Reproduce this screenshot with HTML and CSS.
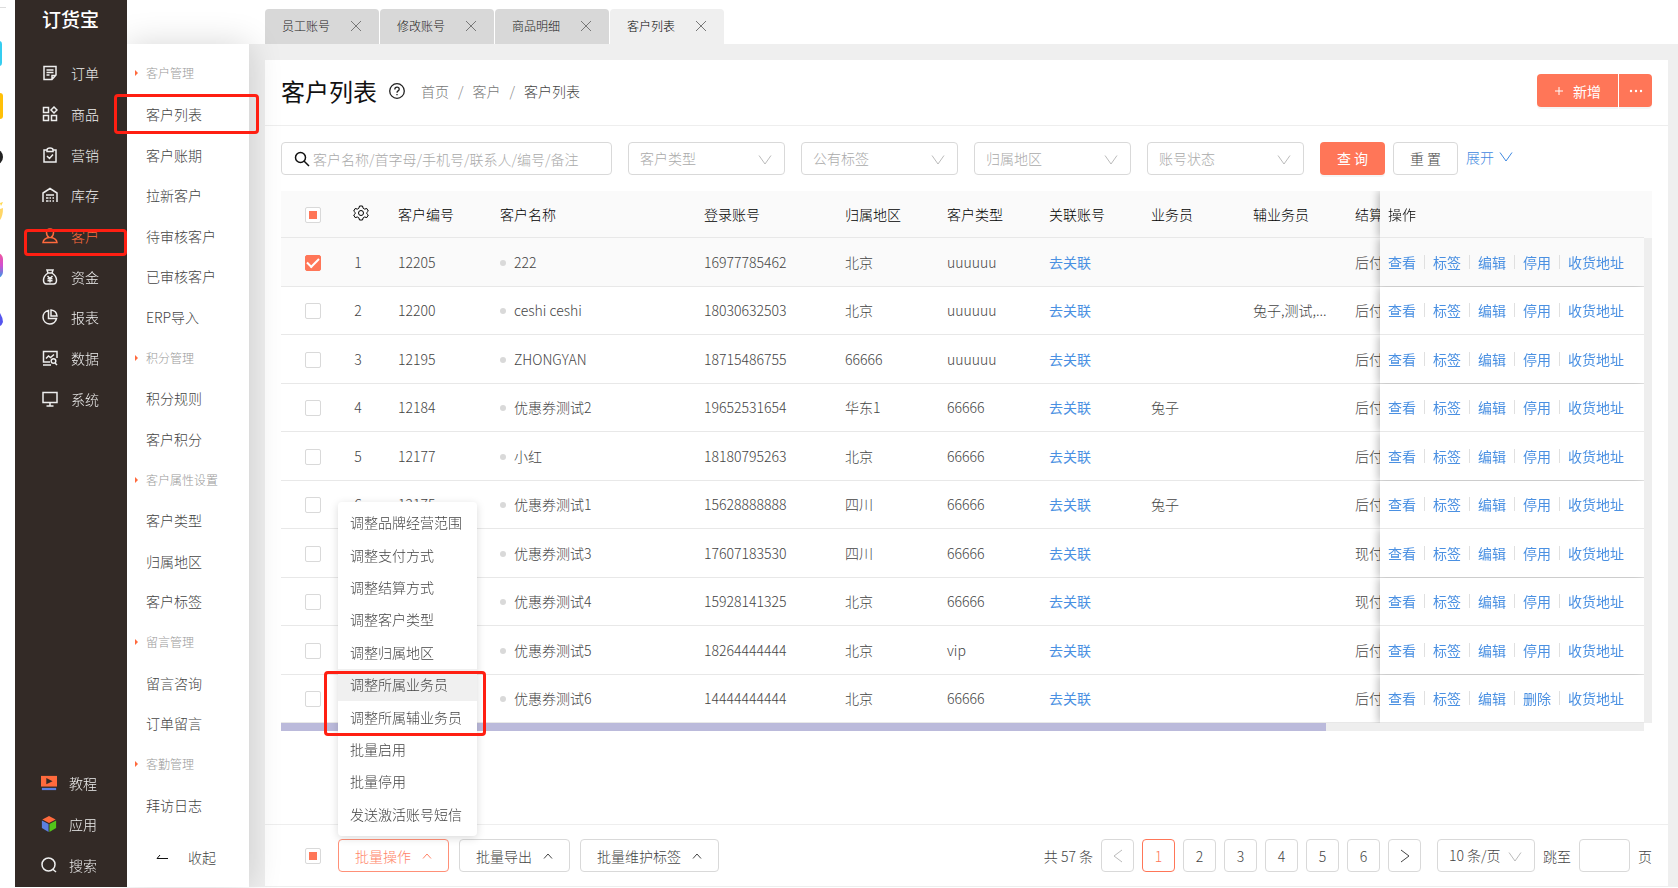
FILE: index.html
```html
<!DOCTYPE html>
<html lang="zh-CN">
<head>
  <meta charset="UTF-8" />
  <meta name="viewport" content="width=device-width, initial-scale=1.0" />
  <title>客户列表</title>
  <link rel="stylesheet" href="styles.css">
</head>
<body>
  <div class="app">
    <div class="dock">
      <svg width="15" height="340" viewBox="0 0 15 340">
        <defs>
          <linearGradient id="dockPink" x1="0" y1="0" x2="0" y2="1">
            <stop offset="0" stop-color="#f0559a" /><stop offset=".5" stop-color="#d24fd0" /><stop offset="1" stop-color="#2f9be8" />
          </linearGradient>
        </defs>
        <rect x="0" y="7" width="6" height="1" fill="#ddd" />
        <rect x="-10" y="41" width="12" height="25" rx="3" fill="#35cdf0" />
        <rect x="-10" y="93" width="13" height="26" rx="3" fill="#ffc008" />
        <circle cx="-5" cy="157" r="8" fill="#222" />
        <path d="M0 203 L3 202 L1 206 Z" fill="#ffd84a" />
        <path d="M0 209 L3 208 Q3 216 0 220 Z" fill="#ffd667" />
        <rect x="-10" y="253" width="13" height="25" rx="6" fill="url(#dockPink)" />
        <path d="M0 313 Q3 318 3 322 Q2 325 0 326 Z" fill="#5555ee" />
      </svg>
    </div>

    <aside class="sidebar">
      <div class="logo">订货宝</div>
      <ul class="nav">
        <li><a href="#"><svg class="nav-icon" viewBox="0 0 16 16"><path d="M14 10V1.5H2v13h8zM10 14.500V10.500h4M4.500 5h7M4.500 7.500h7M4.500 10h3" /></svg>订单</a></li>
        <li><a href="#"><svg class="nav-icon" viewBox="0 0 16 16"><path d="M1.500 1.500h5v5h-5zM1.500 9.500h5v5h-5zM9.500 9.500h5v5h-5zM12 1l3 3-3 3-3-3z" /></svg>商品</a></li>
        <li><a href="#"><svg class="nav-icon" viewBox="0 0 16 16"><path d="M5 3H2v12h12V3h-3M5 4.500V3q0-2 3-2t3 2v1.500zM5 9l2.500 2.500L11 7.500" /></svg>营销</a></li>
        <li><a href="#"><svg class="nav-icon" viewBox="0 0 16 16"><path d="M1 15V6l7-4.500L15 6v9M4 8h8M4 11h2.500M7.500 11H9M10.500 11H12M4 14h2.500M7.500 14H9M10.500 14H12" /></svg>库存</a></li>
        <li class="active"><a href="#"><svg class="nav-icon" viewBox="0 0 16 16"><path d="M8 1q-3.500 0-3.500 3.500T7 9.500Q1.500 10.500 1 14.500h14q-.5-4-6-5 2.500-1.500 2.500-5T8 1z" /></svg>客户</a></li>
        <li><a href="#"><svg class="nav-icon" viewBox="0 0 16 16"><path d="M5 1h6L10 4q4.500 3 4.500 7 0 4-3 4h-7q-3 0-3-4 0-4 4.500-7zM6 4h4M5.500 7L8 9.500 10.500 7M8 9.500V13.500M5.500 9.700h5M5.500 11.700h5" /></svg>资金</a></li>
        <li><a href="#"><svg class="nav-icon" viewBox="0 0 16 16"><path d="M6.500 1.500A6.800 6.800 0 1 0 14.500 9.500H6.500zM9 1v6h6Q14.500 1.500 9 1z" /></svg>报表</a></li>
        <li><a href="#"><svg class="nav-icon" viewBox="0 0 16 16"><path d="M15 8V1.500H1.500V12H8M1 15h8M4 8.500L6.500 6l2 1.500L12 4.500M15 15l-2-2" /><circle cx="11.500" cy="11" r="2.300" /></svg>数据</a></li>
        <li><a href="#"><svg class="nav-icon" viewBox="0 0 16 16"><path d="M1 1.500h14v10H1zM8 11.500v3M4.500 15h7" /></svg>系统</a></li>
      </ul>
      <ul class="nav nav-bottom">
        <li><a href="#"><svg class="nav-icon color" viewBox="0 0 18 16"><rect x="0" y="0" width="18" height="12" fill="#ff6a3d" /><path d="M6 2.500v7l7-3.500z" fill="#332a26" /><rect x="1" y="13.500" width="16" height="2.500" fill="#5b7fe0" /></svg>教程</a></li>
        <li><a href="#"><svg class="nav-icon color" viewBox="0 0 16 18"><path d="M8 0l7.500 4L8 8 .5 4z" fill="#ff6a3d" /><path d="M0 5l7.500 4v9L0 13.500z" fill="#5b7fe0" /><path d="M16 5L8.500 9v9l7.500-4.500z" fill="#52c41a" /></svg>应用</a></li>
        <li><a href="#"><svg class="nav-icon" viewBox="0 0 16 16"><circle cx="7.500" cy="7.500" r="6.500" /><path d="M11.500 12l3.500 3" /></svg>搜索</a></li>
      </ul>
      <div class="mark mark-nav"></div>
    </aside>

    <nav class="submenu">
      <ul>
        <li class="group">客户管理</li>
        <li><a href="#">客户列表</a><div class="mark mark-sub"></div></li>
        <li><a href="#">客户账期</a></li>
        <li><a href="#">拉新客户</a></li>
        <li><a href="#">待审核客户</a></li>
        <li><a href="#">已审核客户</a></li>
        <li><a href="#">ERP导入</a></li>
        <li class="group">积分管理</li>
        <li><a href="#">积分规则</a></li>
        <li><a href="#">客户积分</a></li>
        <li class="group">客户属性设置</li>
        <li><a href="#">客户类型</a></li>
        <li><a href="#">归属地区</a></li>
        <li><a href="#">客户标签</a></li>
        <li class="group">留言管理</li>
        <li><a href="#">留言咨询</a></li>
        <li><a href="#">订单留言</a></li>
        <li class="group">客勤管理</li>
        <li><a href="#">拜访日志</a></li>
      </ul>
      <button class="collapse" type="button">
        <svg width="12" height="6" viewBox="0 0 12 6"><path d="M12 4.500H1L4 1" /></svg>收起
      </button>
    </nav>

    <main class="main">
      <div class="tabs">
        <div class="tab">员工账号<button type="button" aria-label="关闭"><svg viewBox="0 0 12 12"><path d="M1 1l10 10M11 1L1 11" /></svg></button></div>
        <div class="tab">修改账号<button type="button" aria-label="关闭"><svg viewBox="0 0 12 12"><path d="M1 1l10 10M11 1L1 11" /></svg></button></div>
        <div class="tab">商品明细<button type="button" aria-label="关闭"><svg viewBox="0 0 12 12"><path d="M1 1l10 10M11 1L1 11" /></svg></button></div>
        <div class="tab current">客户列表<button type="button" aria-label="关闭"><svg viewBox="0 0 12 12"><path d="M1 1l10 10M11 1L1 11" /></svg></button></div>
      </div>

      <div class="content">
        <div class="card">
          <header class="page-head">
            <h1>客户列表</h1>
            <svg class="help" viewBox="0 0 16 16"><circle cx="8" cy="8" r="7.300" /><path d="M5.800 6.500q0-2.300 2.200-2.300t2.200 2q0 1-1.100 1.700T8 9.800M8 11v1.300" /></svg>
            <div class="crumbs"><a href="#">首页</a><span>/</span><a href="#">客户</a><span>/</span><b>客户列表</b></div>
            <div class="split">
              <button class="btn primary" type="button"><svg width="10" height="10" viewBox="0 0 10 10"><path d="M1 5h8M5 1v8" /></svg>新增</button>
              <button class="btn primary more" type="button" aria-label="更多"><svg width="14" height="4" viewBox="0 0 14 4"><circle cx="2" cy="2" r="1.200" /><circle cx="7" cy="2" r="1.200" /><circle cx="12" cy="2" r="1.200" /></svg></button>
            </div>
          </header>

          <form class="filters">
            <label class="search">
              <svg width="16" height="16" viewBox="0 0 16 16"><circle cx="6.500" cy="6.500" r="5" /><path d="M10 10l5 5" /></svg>
              <input type="text" placeholder="客户名称/首字母/手机号/联系人/编号/备注">
            </label>
            <label class="pick"><select aria-label="客户类型"><option>客户类型</option></select><svg viewBox="0 0 14 10"><path d="M1 .5l6 8.500 6-8.500" /></svg></label>
            <label class="pick"><select aria-label="公有标签"><option>公有标签</option></select><svg viewBox="0 0 14 10"><path d="M1 .5l6 8.500 6-8.500" /></svg></label>
            <label class="pick"><select aria-label="归属地区"><option>归属地区</option></select><svg viewBox="0 0 14 10"><path d="M1 .5l6 8.500 6-8.500" /></svg></label>
            <label class="pick"><select aria-label="账号状态"><option>账号状态</option></select><svg viewBox="0 0 14 10"><path d="M1 .5l6 8.500 6-8.500" /></svg></label>
            <div class="actions">
              <button class="btn primary" type="button">查 询</button>
              <button class="btn" type="button">重 置</button>
              <a class="expand" href="#">展开<svg width="14" height="10" viewBox="0 0 14 10"><path d="M1 .5l6 8.500 6-8.500" /></svg></a>
            </div>
          </form>

          <div class="table-area">
            <div class="table-view">
              <table>
                <colgroup>
                  <col class="c-check"><col class="c-index"><col class="c-unit"><col class="c-name"><col class="c-login">
                  <col class="c-unit"><col class="c-unit"><col class="c-unit"><col class="c-unit"><col class="c-unit"><col class="c-pay"><col class="c-ops">
                </colgroup>
                <thead>
                  <tr>
                    <th class="check"><input class="partial" type="checkbox" aria-label="全选"></th>
                    <th class="index"><svg class="gear" viewBox="0 0 16 16"><path d="M6.500 1h3l.6 2.200 1.500.9 2.200-.6 1.500 2.600L13.700 7.700v.8l1.600 1.500-1.500 2.600-2.200-.6-1.500.9L9.500 15h-3l-.6-2.100-1.500-.9-2.200.6L.7 10l1.600-1.500v-.8L.7 6.100l1.500-2.600 2.200.6 1.500-.9z" /><circle cx="8" cy="8" r="2.500" /></svg></th>
                    <th>客户编号</th><th>客户名称</th><th>登录账号</th><th>归属地区</th><th>客户类型</th>
                    <th>关联账号</th><th>业务员</th><th>辅业务员</th><th>结算方式</th><th class="ops">操作</th>
                  </tr>
                </thead>
                <tbody id="rows"></tbody>
              </table>
              <div class="hbar"><div class="thumb"></div></div>
            </div>
            <div class="vbar"></div>
          </div>

          <footer class="page-foot">
            <input class="partial" type="checkbox" aria-label="全选">
            <div class="drop">
              <button class="btn open" type="button">批量操作<svg width="10" height="6" viewBox="0 0 10 6"><path d="M1 5.500l4-4.500 4 4.500" /></svg></button>
              <ul class="menu">
                <li>调整品牌经营范围</li>
                <li>调整支付方式</li>
                <li>调整结算方式</li>
                <li>调整客户类型</li>
                <li>调整归属地区</li>
                <li class="hover">调整所属业务员</li>
                <li>调整所属辅业务员</li>
                <li>批量启用</li>
                <li>批量停用</li>
                <li>发送激活账号短信</li>
              </ul>
              <div class="mark mark-menu"></div>
            </div>
            <button class="btn" type="button">批量导出<svg width="10" height="6" viewBox="0 0 10 6"><path d="M1 5.500l4-4.500 4 4.500" /></svg></button>
            <button class="btn" type="button">批量维护标签<svg width="10" height="6" viewBox="0 0 10 6"><path d="M1 5.500l4-4.500 4 4.500" /></svg></button>

            <div class="pager">
              <span>共 57 条</span>
              <button class="page off" type="button" aria-label="上一页"><svg width="10" height="14" viewBox="0 0 10 14"><path d="M9 1L1 7l8 6" /></svg></button>
              <button class="page on" type="button">1</button>
              <button class="page" type="button">2</button>
              <button class="page" type="button">3</button>
              <button class="page" type="button">4</button>
              <button class="page" type="button">5</button>
              <button class="page" type="button">6</button>
              <button class="page" type="button" aria-label="下一页"><svg width="10" height="14" viewBox="0 0 10 14"><path d="M1 1l8 6-8 6" /></svg></button>
              <label class="pick size"><select aria-label="每页条数"><option>10 条/页</option></select><svg viewBox="0 0 14 10"><path d="M1 .5l6 8.500 6-8.500" /></svg></label>
              <label class="jump">跳至<input type="text">页</label>
            </div>
          </footer>
        </div>
      </div>
    </main>
  </div>

  <script>
    // id, name, login, region, type, salesman, assistant, payment, fourth action
    const customers = [
      ["12205", "222", "16977785462", "北京", "uuuuuu", "", "", "后付款", "停用"],
      ["12200", "ceshi ceshi", "18030632503", "北京", "uuuuuu", "", "兔子,测试,...", "后付款", "停用"],
      ["12195", "ZHONGYAN", "18715486755", "66666", "uuuuuu", "", "", "后付款", "停用"],
      ["12184", "优惠券测试2", "19652531654", "华东1", "66666", "兔子", "", "后付款", "停用"],
      ["12177", "小红", "18180795263", "北京", "66666", "", "", "后付款", "停用"],
      ["12175", "优惠券测试1", "15628888888", "四川", "66666", "兔子", "", "后付款", "停用"],
      ["12174", "优惠券测试3", "17607183530", "四川", "66666", "", "", "现付款", "停用"],
      ["12173", "优惠券测试4", "15928141325", "北京", "66666", "", "", "现付款", "停用"],
      ["12172", "优惠券测试5", "18264444444", "北京", "vip", "", "", "后付款", "停用"],
      ["12171", "优惠券测试6", "14444444444", "北京", "66666", "", "", "后付款", "删除"]
    ];
    const rows = document.getElementById("rows");
    rows.innerHTML = customers.map((c, i) => `
      <tr class="${i === 0 ? "selected" : ""}">
        <td class="check"><input type="checkbox" aria-label="${c[1]}" ${i === 0 ? "checked" : ""}></td>
        <td class="index">${i + 1}</td>
        <td>${c[0]}</td>
        <td><i class="dot"></i>${c[1]}</td>
        <td>${c[2]}</td>
        <td>${c[3]}</td>
        <td>${c[4]}</td>
        <td><a href="#">去关联</a></td>
        <td>${c[5]}</td>
        <td>${c[6]}</td>
        <td>${c[7]}</td>
        <td class="ops"><div class="links">${["查看", "标签", "编辑", c[8], "收货地址"].map(t => `<a href="#">${t}</a>`).join("")}</div></td>
      </tr>`).join("");
  </script>
</body>
</html>
```
FILE: styles.css
```css
* {
  box-sizing: border-box;
}
body {
  margin: 0;
  font-family: "Noto Sans CJK SC", sans-serif;
  font-size: 14px;
  font-weight: 300;
  line-height: 20px;
  color: #444;
  background: #fff;
}
ul {
  margin: 0;
  padding: 0;
  list-style: none;
}
a {
  color: #3f88e0;
  text-decoration: none;
}
svg {
  fill: none;
  stroke: currentColor;
  flex: none;
}
button, input, select {
  font: inherit;
  color: inherit;
  margin: 0;
}
button {
  padding: 0;
  border: 0;
  background: none;
}
.app {
  display: flex;
  height: 100vh;
  min-height: 700px;
  padding-bottom: 1px;
  overflow: hidden;
}
.dock {
  width: 15px;
  flex: none;
}
.dock svg {
  stroke: none;
}

/* left navigation */
.sidebar {
  position: relative;
  z-index: 1;
  width: 112px;
  flex: none;
  display: flex;
  flex-direction: column;
  padding-bottom: 2px;
  background: #332a26;
  color: #eee;
}
.logo {
  height: 53px;
  padding: 6px 0 0 27px;
  font-size: 19px;
  font-weight: 500;
  line-height: 26px;
  color: #fff;
}
.nav {
  display: flex;
  flex-direction: column;
  height: 366px;
}
.nav-bottom {
  height: 122px;
  margin-top: auto;
}
.nav li {
  flex: 1;
  display: flex;
}
.nav a {
  display: flex;
  align-items: center;
  gap: 13px;
  padding-left: 27px;
  color: inherit;
}
.nav .active {
  color: #ff6a3d;
}
.nav-icon {
  width: 16px;
  height: 16px;
  stroke-width: 1.5;
}
.nav-icon.color {
  stroke: none;
}
.nav-bottom a {
  gap: 12px;
  padding-left: 26px;
}

/* second level menu */
.submenu {
  position: relative;
  width: 122px;
  flex: none;
  display: flex;
  flex-direction: column;
  margin-top: 44px;
  padding-top: 9px;
  background: #fff;
  box-shadow: 0 0 32px rgba(0, 0, 0, 0.16);
}
.submenu ul {
  flex: 1;
  display: flex;
  flex-direction: column;
}
.submenu li {
  position: relative;
  flex: 1;
  display: flex;
  align-items: center;
  padding-left: 19px;
}
.submenu li a {
  color: #444;
}
.submenu .group {
  font-size: 12px;
  color: #999;
}
.submenu .group::before {
  content: "";
  position: absolute;
  left: 8px;
  border: 3px solid transparent;
  border-left-color: #ff6a3d;
  border-right: 0;
}
.collapse {
  display: flex;
  align-items: center;
  gap: 20px;
  height: 62px;
  padding: 2px 0 0 29px;
}
.collapse svg {
  stroke: #111;
}

/* red outlines */
.mark {
  position: absolute;
  z-index: 2;
  border: 3px solid #ff1f12;
  border-radius: 4px;
  pointer-events: none;
}
.mark-nav {
  left: 9px;
  right: 0;
  top: 229px;
  height: 27px;
}
.mark-sub {
  left: -13px;
  right: -10px;
  top: 0;
  bottom: 0;
}
.mark-menu {
  left: -14px;
  bottom: 136px;
  width: 162px;
  height: 65px;
}

/* right side */
.main {
  flex: 1;
  min-width: 0;
  display: flex;
  flex-direction: column;
}
.tabs {
  display: flex;
  gap: 1px;
  padding: 9px 0 0 16px;
}
.tab {
  display: flex;
  align-items: center;
  justify-content: space-between;
  width: 114px;
  height: 35px;
  padding: 0 17px 2px;
  border-radius: 4px 4px 0 0;
  background: #d8d8d8;
  font-size: 12px;
  color: #222;
}
.tab.current {
  background: #efefef;
  color: #000;
}
.tab button {
  display: flex;
  color: #777;
}
.tab svg {
  width: 12px;
  height: 12px;
}
.content {
  flex: 1;
  display: flex;
  padding: 16px 10px 0 16px;
  background: #efefef;
}
.card {
  flex: 1;
  min-width: 0;
  display: flex;
  flex-direction: column;
  background: #fff;
}
.page-head {
  display: flex;
  align-items: center;
  height: 66px;
  padding: 0 16px 4px;
  border-bottom: 1px solid #eee;
}
h1 {
  margin: 0 12px 0 0;
  font-size: 24px;
  font-weight: 400;
  line-height: 32px;
  color: #111;
}
.help {
  width: 16px;
  height: 16px;
  color: #222;
  stroke-width: 1.3;
}
.crumbs {
  display: flex;
  margin-left: 16px;
}
.crumbs a {
  color: #777;
}
.crumbs span {
  margin: 0 9px;
  color: #888;
}
.crumbs b {
  font-weight: inherit;
}
.split {
  display: flex;
  gap: 1px;
  margin-left: auto;
}
.split .btn:first-child {
  width: 81px;
  gap: 9px;
  border-radius: 4px 0 0 4px;
}
.split .more {
  width: 33px;
  border-radius: 0 4px 4px 0;
}
.more svg {
  fill: #fff;
  stroke: none;
}
.btn {
  display: flex;
  align-items: center;
  justify-content: center;
  gap: 11px;
  height: 33px;
  padding: 0 16px;
  border: 1px solid #d9d9d9;
  border-radius: 4px;
  background: #fff;
}
.btn.primary {
  padding: 0;
  border: 0;
  background: #ff7658;
  color: #fff;
  font-weight: 400;
  box-shadow: 0 2px 0 rgba(0, 0, 0, 0.04);
}
.btn.open {
  border-color: #ff9078;
  color: #ff8468;
}

/* filters */
.filters {
  display: flex;
  gap: 16px;
  padding: 16px 16px 0;
}
.search {
  display: flex;
  align-items: center;
  gap: 3px;
  width: 331px;
  height: 33px;
  padding: 0 12px;
  border: 1px solid #d9d9d9;
  border-radius: 4px;
}
.search svg {
  stroke: #111;
  stroke-width: 1.5;
}
.search input {
  flex: 1;
  min-width: 0;
  padding: 0;
  border: 0;
  outline: 0;
  background: none;
}
.search input::placeholder {
  color: #aaa;
}
.pick {
  position: relative;
  width: 157px;
}
.pick select {
  width: 100%;
  height: 33px;
  padding: 0 11px 2px;
  border: 1px solid #d9d9d9;
  border-radius: 4px;
  background: #fff;
  color: #aaa;
  appearance: none;
}
.pick svg {
  position: absolute;
  right: 13px;
  top: 13px;
  width: 14px;
  height: 10px;
  color: #bbb;
  pointer-events: none;
}
.actions {
  display: flex;
  align-items: center;
  gap: 8px;
}
.actions .btn {
  width: 65px;
  padding: 0 0 2px;
}
.expand {
  display: flex;
  align-items: center;
  gap: 5px;
  padding-bottom: 3px;
}

/* customer table */
.table-area {
  display: flex;
  margin: 16px 16px 0;
}
.table-view {
  flex: 1;
  min-width: 0;
  overflow: hidden;
}
table {
  table-layout: fixed;
  width: 1778px;
  height: 532px;
  border-spacing: 0;
}
.c-check {
  width: 63px;
}
.c-index {
  width: 46px;
}
.c-unit {
  width: 102px;
}
.c-name {
  width: 204px;
}
.c-login {
  width: 141px;
}
.c-ops {
  width: 264px;
}
th, td {
  padding: 0 8px;
  border-bottom: 1px solid #e8e8e8;
  background: #fff;
  font-weight: inherit;
  text-align: left;
  white-space: nowrap;
}
th {
  height: 47px;
  background: #fafafa;
  color: #000;
}
td a {
  font-weight: 400;
  color: #4a90e2;
}
.selected td {
  background: #fafafa;
}
.check, .index {
  text-align: center;
}
.check {
  padding: 0 8px 2px;
}
td.index {
  padding-right: 26px;
}
th.index {
  padding: 0 0 2px 9px;
}
.gear {
  display: block;
  width: 16px;
  height: 16px;
}
.dot {
  display: inline-block;
  width: 6px;
  height: 6px;
  margin-right: 8px;
  border-radius: 50%;
  background: #d9d9d9;
  vertical-align: 2px;
}
.ops {
  position: sticky;
  right: 0;
  box-shadow: -2px 0 8px rgba(0, 0, 0, 0.25);
  clip-path: inset(0 0 0 -10px);
}
.links {
  display: flex;
}
.links a {
  line-height: 14px;
}
.links a + a {
  margin-left: 8px;
  padding-left: 8px;
  border-left: 1px solid #e0e0e0;
}
.hbar {
  height: 8px;
  background: #eee;
}
.thumb {
  width: 76.7%;
  height: 8px;
  background: #bbbadb;
}
.vbar {
  width: 8px;
  margin-bottom: 8px;
  border-top: 47px solid #fafafa;
  background: #eee;
}

input[type="checkbox"] {
  appearance: none;
  display: inline-flex;
  align-items: center;
  justify-content: center;
  width: 16px;
  height: 16px;
  border: 1px solid #d9d9d9;
  border-radius: 2px;
  background: #fff;
  vertical-align: middle;
}
input[type="checkbox"].partial::before {
  content: "";
  width: 8px;
  height: 8px;
  background: #ff7658;
}
input[type="checkbox"]:checked {
  border-color: #ff7658;
  background: #ff7658;
}
input[type="checkbox"]:checked::before {
  content: "";
  width: 10px;
  height: 5px;
  margin-bottom: 3px;
  border: solid #fff;
  border-width: 0 0 2px 2px;
  transform: rotate(-45deg);
}

/* bottom bar */
.page-foot {
  display: flex;
  align-items: center;
  gap: 10px;
  height: 63px;
  margin-top: auto;
  padding: 0 16px 0 40px;
  border-top: 1px solid #eee;
  border-bottom: 1px solid #eee;
}
.page-foot .drop {
  position: relative;
  margin-left: 7px;
}
.menu {
  position: absolute;
  left: 0;
  bottom: 36px;
  display: flex;
  flex-direction: column;
  width: 139px;
  height: 334px;
  padding: 5px 0;
  border-radius: 4px;
  background: #fff;
  box-shadow: 0 2px 8px rgba(0, 0, 0, 0.15);
  white-space: nowrap;
}
.menu li {
  flex: 1;
  display: flex;
  align-items: center;
  padding: 0 0 2px 12px;
}
.menu .hover {
  background: #f0f0f0;
}
.pager {
  display: flex;
  align-items: center;
  gap: 8px;
  margin-left: auto;
}
.page {
  display: flex;
  align-items: center;
  justify-content: center;
  width: 33px;
  height: 33px;
  border: 1px solid #d9d9d9;
  border-radius: 4px;
}
.page.on {
  border-color: #ff7658;
  color: #ff7658;
}
.page.off {
  color: #bbb;
}
.size {
  width: 98px;
  margin-left: 8px;
}
.size select {
  color: inherit;
}
.jump {
  display: flex;
  align-items: center;
  gap: 8px;
}
.jump input {
  width: 51px;
  height: 33px;
  border: 1px solid #d9d9d9;
  border-radius: 4px;
}
```
